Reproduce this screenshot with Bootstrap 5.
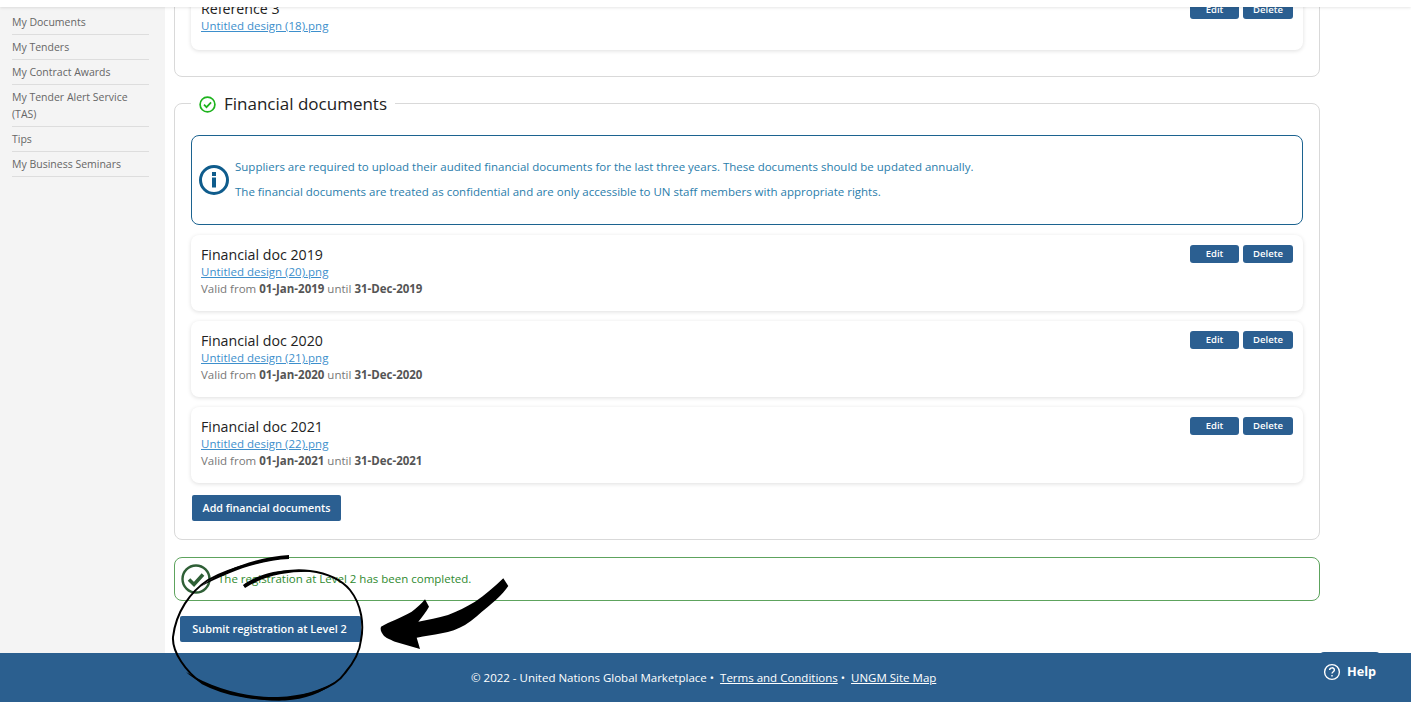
<!DOCTYPE html>
<html lang="en">
<head>
<meta charset="utf-8">
<title>UNGM</title>
<link href="https://cdn.jsdelivr.net/npm/bootstrap@5.3.0/dist/css/bootstrap.min.css" rel="stylesheet">
<style>
html,body{height:709px;overflow:hidden;background:#fff}
body{font-family:"Open Sans","Noto Sans",sans-serif;font-size:11px;color:#555;position:relative}
.topcover{position:absolute;left:0;right:0;top:0;height:7px;background:#fff;box-shadow:0 1px 3px rgba(0,0,0,.1);z-index:3}
.shell{height:653px}
.sidenav{width:165px;flex:none;background:#f4f4f4;padding:10px 16px 0 12px}
.sidenav a{display:block;color:#666;font-size:10.5px;line-height:16.5px;text-decoration:none;padding:4px 0 3.5px;border-bottom:1px solid #ddd}
.mainarea{width:1146px;margin-left:9px;flex:none}
.panel1{margin-top:-40px;height:117px;border:1px solid #d9d9d9;border-radius:8px;padding:0 16px}
.panel2{margin-top:26px;height:437px;border:1px solid #d9d9d9;border-radius:8px;padding:31px 16px 0;position:relative}
.legendbox{position:absolute;left:16px;top:-13px;background:#fff;padding:0 8px;height:26px;font-size:17px;color:#222;font-weight:500}
.doccard{border-radius:8px;box-shadow:0 1px 4px rgba(0,0,0,.13);background:#fff;padding:10px;height:76px;margin-bottom:10px}
.doccard.firstcard{height:89px;margin:0}
.doctitle{font-size:14.2px;line-height:18px;color:#222;font-weight:500;padding-top:1px;margin-bottom:-1px}
.firstcard .doctitle{margin-top:28px}
.firstcard .btnrow{margin-top:30px}
.doclink{font-size:11.5px;line-height:17px;color:#3d8fcc;text-decoration:underline;display:block}
.docmeta{font-size:11.5px;line-height:17px;color:#777}
.docmeta b{color:#555;font-weight:700}
.ubtn{background:#2b5f91;color:#fff;border:0;border-radius:3px;font-size:9.5px;font-weight:600;height:18px;line-height:18px;padding:0;width:49px;font-family:inherit}
.ubtn.widea{width:50px}
.infobox{border:1px solid #1c6390;border-radius:8px;height:90px;margin-bottom:10px;padding:0 7px;color:#2a7dab;font-size:11.5px}
.infobox p{margin:0;line-height:17px}
.infobox p+p{margin-top:8.5px}
.infocopy{margin:-2px 0 0 2px}
.addbtn{background:#2b5f91;color:#fff;border:0;border-radius:2px;font-size:10.7px;font-weight:600;height:26px;width:149px;padding:0;margin:2px 0 0 1px;font-family:inherit}
.okbox{border:1px solid #5da35d;border-radius:8px;height:44px;margin-top:17px;padding-left:6px;color:#2f8a2f;font-size:11.5px}
.okbox span{margin-left:3px}
.subbtn{background:#2b5f91;color:#fff;border:0;border-radius:2px;font-size:10.9px;font-weight:600;height:26px;width:181px;padding:0 2px 0 0;margin:15px 0 0 6px;display:block;font-family:inherit}
.footbar{height:49px;background:#2b5f8f;color:#fff;font-size:11.5px;padding:0 0 0 471px;position:relative;line-height:49px}
.footbar a{color:#fff;text-decoration:underline}
.helptab{position:absolute;left:1320px;top:-1px;width:60px;height:36px;background:#2b5f8f;border-radius:4px 4px 0 0;display:flex;align-items:center;gap:6px;padding:3px 0 0 3px;font-size:12.7px;font-weight:700;line-height:1}
.inkover{position:absolute;left:0;top:0;z-index:4;pointer-events:none}
</style>
</head>
<body>
<div class="topcover"></div>
<div class="shell d-flex">
  <nav class="sidenav">
    <a href="#">My Documents</a>
    <a href="#">My Tenders</a>
    <a href="#">My Contract Awards</a>
    <a href="#">My Tender Alert Service (TAS)</a>
    <a href="#">Tips</a>
    <a href="#">My Business Seminars</a>
  </nav>
  <main class="mainarea">
    <section class="panel1">
      <div class="doccard firstcard d-flex justify-content-between">
        <div>
          <div class="doctitle">Reference 3</div>
          <a class="doclink" href="#">Untitled design (18).png</a>
        </div>
        <div class="btnrow d-flex gap-1"><button class="ubtn">Edit</button><button class="ubtn widea">Delete</button></div>
      </div>
    </section>
    <section class="panel2">
      <div class="legendbox d-flex align-items-center gap-2">
        <svg width="17" height="17" viewBox="0 0 17 17" fill="none" stroke="#1db31d" stroke-width="1.7"><circle cx="8.5" cy="8.5" r="7.4"/><path d="M5 8.7l2.5 2.5 4.6-4.8"/></svg>
        <span>Financial documents</span>
      </div>
      <div class="infobox d-flex align-items-center gap-1">
        <svg width="30" height="30" viewBox="0 0 30 30" fill="none" style="flex:none"><circle cx="15" cy="15" r="13.5" stroke="#0f5c8c" stroke-width="3"/><rect x="13" y="12.5" width="4" height="10" fill="#0f5c8c"/><rect x="13" y="7" width="4" height="4" fill="#0f5c8c"/></svg>
        <div class="infocopy">
          <p>Suppliers are required to upload their audited financial documents for the last three years. These documents should be updated annually.</p>
          <p>The financial documents are treated as confidential and are only accessible to UN staff members with appropriate rights.</p>
        </div>
      </div>
      <div class="doccard d-flex justify-content-between">
        <div>
          <div class="doctitle">Financial doc 2019</div>
          <a class="doclink" href="#">Untitled design (20).png</a>
          <div class="docmeta">Valid from <b>01-Jan-2019</b> until <b>31-Dec-2019</b></div>
        </div>
        <div class="d-flex gap-1"><button class="ubtn">Edit</button><button class="ubtn widea">Delete</button></div>
      </div>
      <div class="doccard d-flex justify-content-between">
        <div>
          <div class="doctitle">Financial doc 2020</div>
          <a class="doclink" href="#">Untitled design (21).png</a>
          <div class="docmeta">Valid from <b>01-Jan-2020</b> until <b>31-Dec-2020</b></div>
        </div>
        <div class="d-flex gap-1"><button class="ubtn">Edit</button><button class="ubtn widea">Delete</button></div>
      </div>
      <div class="doccard d-flex justify-content-between">
        <div>
          <div class="doctitle">Financial doc 2021</div>
          <a class="doclink" href="#">Untitled design (22).png</a>
          <div class="docmeta">Valid from <b>01-Jan-2021</b> until <b>31-Dec-2021</b></div>
        </div>
        <div class="d-flex gap-1"><button class="ubtn">Edit</button><button class="ubtn widea">Delete</button></div>
      </div>
      <button class="addbtn">Add financial documents</button>
    </section>
    <div class="okbox d-flex align-items-center gap-1">
      <svg width="30" height="30" viewBox="0 0 30 30" fill="none" style="flex:none"><circle cx="15" cy="15" r="13.5" stroke="#2f5f36" stroke-width="2.4"/><path d="M8 15.5l5 5 9-10" stroke="#2f5f36" stroke-width="3.6"/></svg>
      <span>The registration at Level 2 has been completed.</span>
    </div>
    <button class="subbtn">Submit registration at Level 2</button>
  </main>
</div>
<footer class="footbar">
  © 2022 - United Nations Global Marketplace •&nbsp; <a href="#">Terms and Conditions</a> •&nbsp; <a href="#">UNGM Site Map</a>
  <div class="helptab">
    <svg width="18" height="18" viewBox="0 0 18 18" fill="none" stroke="#fff" stroke-width="1.4"><circle cx="9" cy="9" r="7.4"/><path d="M6.6 7.1c0-3 4.8-3 4.8-.2 0 1.8-2.4 1.8-2.4 3.7"/><path d="M9 12v1.5"/></svg>
    <span>Help</span>
  </div>
</footer>
<svg class="inkover" width="1411" height="709" viewBox="0 0 1411 709" fill="none">
  <path d="M289 557C275 558 235 565 208 580C190 592 176 612 173 637C172 652 186 672 202 683C225 695 255 700 278 699C305 698 335 688 345 673C356 660 360 650 361 640C364 625 362 605 350 590C340 578 325 573 310 571C290 568 262 574 244 586" stroke="#000" stroke-width="2"/>
  <path d="M289 555L289 559C265 560 235 568 200 587C228 566 262 557 289 555Z" fill="#000"/>
  <path d="M186 672C205 690 250 702 285 700.500C305 699.500 322 693 335 682C320 690 303 696 278 697C250 698 215 690 186 672Z" fill="#000"/>
  <path d="M315 572C290 567 262 571 243 585L245 588C265 575 290 571 315 572Z" fill="#000"/>
  <path d="M503.3 578.3L508.3 586C502 595 495 601 488 606.7C480 613 473 620 465 625C458 629 450 632 441.7 633.3C433 635 425 636 416.7 637.7L420 649L395 641.7C390 639.5 385 637.5 383.3 635C381 632 380 629 381 626.7C386 624 390 622 395 620C401 617 406 615 411.7 611.7C417 608 421 604 425 599.3L429 606.700C426 612 422 617 418.300 621.700C428 620 438 618 448 615C458 611 466 607 475 601.700C485 595 494 587 503.300 578.300Z" fill="#000"/>
</svg>
<script src="https://cdn.jsdelivr.net/npm/bootstrap@5.3.0/dist/js/bootstrap.bundle.min.js"></script>
</body>
</html>
